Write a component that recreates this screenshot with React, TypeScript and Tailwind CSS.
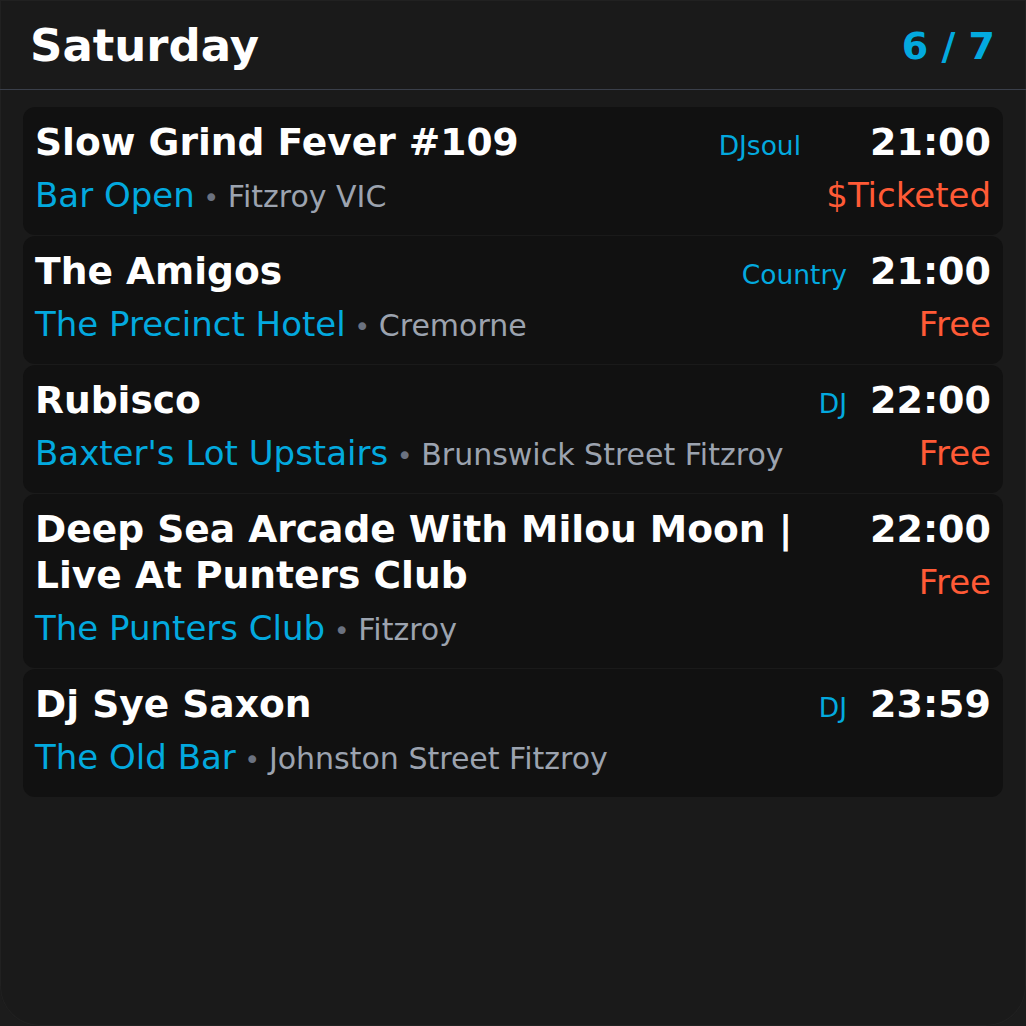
import React from 'react';

type EventItem = {
  title: string;
  venue: string;
  location: string;
  genre?: string;
  genreGap?: string;
  time: string;
  price?: string;
};

const events: EventItem[] = [
  {
    title: 'Slow Grind Fever #109',
    venue: 'Bar Open',
    location: 'Fitzroy VIC',
    genre: 'DJsoul',
    genreGap: 'mr-[69px]',
    time: '21:00',
    price: '$Ticketed',
  },
  {
    title: 'The Amigos',
    venue: 'The Precinct Hotel',
    location: 'Cremorne',
    genre: 'Country',
    time: '21:00',
    price: 'Free',
  },
  {
    title: 'Rubisco',
    venue: "Baxter's Lot Upstairs",
    location: 'Brunswick Street Fitzroy',
    genre: 'DJ',
    time: '22:00',
    price: 'Free',
  },
  {
    title: 'Deep Sea Arcade With Milou Moon | Live At Punters Club',
    venue: 'The Punters Club',
    location: 'Fitzroy',
    time: '22:00',
    price: 'Free',
  },
  {
    title: 'Dj Sye Saxon',
    venue: 'The Old Bar',
    location: 'Johnston Street Fitzroy',
    genre: 'DJ',
    time: '23:59',
  },
];

const EventCard = ({ event }: { event: EventItem }) => (
  <div className="flex gap-6 rounded-xl bg-[#111111] px-3 pt-3 pb-4">
    <div className="min-w-0 flex-1">
      <h3 className="text-[37.6px] font-bold leading-[46px] text-white">{event.title}</h3>
      <p className="mt-[6px] h-[48px] whitespace-nowrap text-[34px] leading-[48px]">
        <span className="text-[#03a9df]">{event.venue}</span>
        <span className="text-[27px] text-[#6b7280]"> • </span>
        <span className="text-[30px] text-[#9ca3af]">{event.location}</span>
      </p>
    </div>
    <div className="flex shrink-0 flex-col items-end">
      <div className="flex h-[46px] items-baseline leading-[46px]">
        {event.genre && (
          <span className={`text-[26.5px] text-[#03a9df] ${event.genreGap ?? 'mr-[23px]'}`}>{event.genre}</span>
        )}
        <span className="text-[38px] font-bold text-white">{event.time}</span>
      </div>
      {event.price && (
        <span className="mt-[6px] h-[48px] text-[34px] leading-[48px] text-[#ff5a36]">{event.price}</span>
      )}
    </div>
  </div>
);

export default function App() {
  return (
    <div className="h-[1026px] w-[1026px] bg-[#1c1c1c]" style={{ fontFamily: '"DejaVu Sans", sans-serif' }}>
      <div className="h-full w-full overflow-hidden rounded-b-[40px] bg-[#1a1a1a] shadow-[inset_0_0_0_1px_rgba(255,255,255,0.03)]">
        <header className="flex h-[90px] items-center justify-between border-b border-[#3a3f4a] pl-[30px] pr-[31px] pt-[3px]">
          <h1 className="text-[45px] font-bold text-white">Saturday</h1>
          <span className="text-[38px] font-bold text-[#03a9df]">6 / 7</span>
        </header>
        <div className="flex flex-col gap-px px-[23px] pt-[17px]">
          {events.map((event, i) => (
            <EventCard key={i} event={event} />
          ))}
        </div>
      </div>
    </div>
  );
}
